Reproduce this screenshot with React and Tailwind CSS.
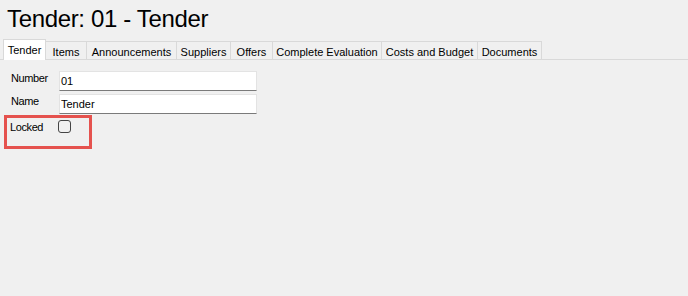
export default function App() {
  const tabs = [
    ["Items", "w-[41px]"],
    ["Announcements", "w-[90px]"],
    ["Suppliers", "w-[54px]"],
    ["Offers", "w-[42px]"],
    ["Complete Evaluation", "w-[109px]"],
    ["Costs and Budget", "w-[96px]"],
    ["Documents", "w-[64px]"],
  ];
  return (
    <div className="w-[688px] h-[296px] bg-[#f0f0f0] text-black overflow-hidden font-['Liberation_Sans',Arial,sans-serif]">
      <div className="pt-[5px] pl-[7px] h-[39px]">
        <div className="text-[24px] leading-[28px] tracking-[-0.35px]">Tender: 01 - Tender</div>
      </div>
      <div className="flex items-end h-[21px] border-b border-[#d9d9d9] pl-[3px]">
        <div className="relative -mb-px h-[21px] w-[43px] bg-white border-l border-t border-r border-[#d9d9d9] text-[11px] leading-[18px] pt-px text-center">
          Tender
        </div>
        {tabs.map(([t, w]) => (
          <div
            key={t}
            className={`${w} h-[18px] border-t border-r border-[#d9d9d9] text-[11px] leading-[18px] pt-px text-center whitespace-nowrap`}
          >
            {t}
          </div>
        ))}
      </div>
      <div className="pt-[11px] text-[11px]">
        <div className="flex pl-[11px] h-[20px]">
          <div className="w-[48px] leading-[14px] tracking-[-0.4px]">Number</div>
          <div className="w-[198px] h-[20px] bg-white border border-[#e3e3e3] border-b-[#7a7a7a] pl-px leading-[18px]">01</div>
        </div>
        <div className="flex pl-[11px] h-[20px] mt-[3px]">
          <div className="w-[48px] leading-[14px] tracking-[-0.4px]">Name</div>
          <div className="w-[198px] h-[20px] bg-white border border-[#e3e3e3] border-b-[#7a7a7a] pl-px leading-[18px]">Tender</div>
        </div>
        <div className="ml-[4px] mt-px w-[88px] h-[34px] border-[3px] border-[#e5524e] flex pl-[3px] pt-[2px]">
          <div className="w-[48px] leading-[14px] tracking-[-0.4px]">Locked</div>
          <div className="w-[13px] h-[13px] rounded-[3px] border border-[#444444]"></div>
        </div>
      </div>
    </div>
  );
}
